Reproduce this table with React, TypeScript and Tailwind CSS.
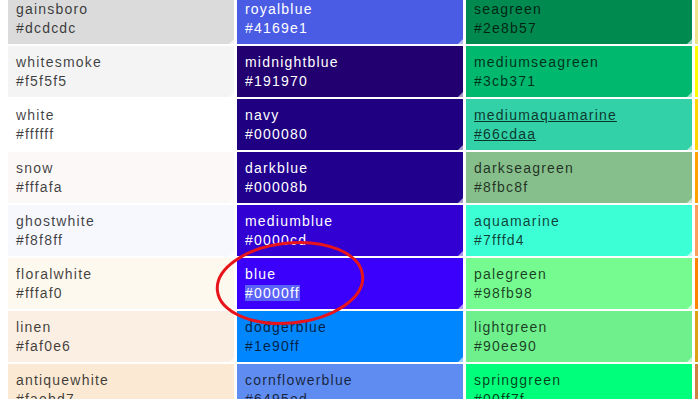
import React from "react";

type Swatch = {
  name: string;
  hex: string;
  bg: string;
  light?: boolean;
  hover?: boolean;
  selected?: boolean;
};

// one array per column, top to bottom
const columns: Swatch[][] = [
  [
    { name: "gainsboro", hex: "#dcdcdc", bg: "bg-[#dbdbdb]" },
    { name: "whitesmoke", hex: "#f5f5f5", bg: "bg-[#f4f4f4]" },
    { name: "white", hex: "#ffffff", bg: "bg-white" },
    { name: "snow", hex: "#fffafa", bg: "bg-[#fdf8f8]" },
    { name: "ghostwhite", hex: "#f8f8ff", bg: "bg-[#f7f7fe]" },
    { name: "floralwhite", hex: "#fffaf0", bg: "bg-[#fef9ee]" },
    { name: "linen", hex: "#faf0e6", bg: "bg-[#fbeee3]" },
    { name: "antiquewhite", hex: "#faebd7", bg: "bg-[#fbe9d4]" },
  ],
  [
    { name: "royalblue", hex: "#4169e1", bg: "bg-[#4a5ce4]", light: true },
    { name: "midnightblue", hex: "#191970", bg: "bg-[#22006f]", light: true },
    { name: "navy", hex: "#000080", bg: "bg-[#1e0080]", light: true },
    { name: "darkblue", hex: "#00008b", bg: "bg-[#21008e]", light: true },
    { name: "mediumblue", hex: "#0000cd", bg: "bg-[#3200d2]", light: true },
    { name: "blue", hex: "#0000ff", bg: "bg-[#3b00fb]", light: true, selected: true },
    { name: "dodgerblue", hex: "#1e90ff", bg: "bg-[#0086ff]" },
    { name: "cornflowerblue", hex: "#6495ed", bg: "bg-[#5f8cf0]" },
  ],
  [
    { name: "seagreen", hex: "#2e8b57", bg: "bg-[#008a4f]" },
    { name: "mediumseagreen", hex: "#3cb371", bg: "bg-[#00b86e]" },
    { name: "mediumaquamarine", hex: "#66cdaa", bg: "bg-[#33d1a8]", hover: true },
    { name: "darkseagreen", hex: "#8fbc8f", bg: "bg-[#86bf8b]" },
    { name: "aquamarine", hex: "#7fffd4", bg: "bg-[#3dffd6]" },
    { name: "palegreen", hex: "#98fb98", bg: "bg-[#75fb8f]" },
    { name: "lightgreen", hex: "#90ee90", bg: "bg-[#6ff08d]" },
    { name: "springgreen", hex: "#00ff7f", bg: "bg-[#00ff7a]" },
  ],
  [
    { name: "palegoldenrod", hex: "#eee8aa", bg: "bg-[#efe48c]" },
    { name: "yellow", hex: "#ffff00", bg: "bg-[#fffb00]" },
    { name: "gold", hex: "#ffd700", bg: "bg-[#ffd400]" },
    { name: "orange", hex: "#ffa500", bg: "bg-[#ffa100]" },
    { name: "sandybrown", hex: "#f4a460", bg: "bg-[#fa9f5c]" },
    { name: "darkorange", hex: "#ff8c00", bg: "bg-[#ff8500]" },
    { name: "goldenrod", hex: "#daa520", bg: "bg-[#dba215]" },
    { name: "peru", hex: "#cd853f", bg: "bg-[#cd8440]" },
  ],
];

function SwatchCell({ s }: { s: Swatch }) {
  const text = s.light ? "text-white" : "text-black/75";
  return (
    <a
      className={`relative block h-[51px] shrink-0 px-2 pt-[7px] text-[14px] leading-[19px] tracking-[1.2px] ${s.bg} ${text} ${
        s.hover ? "underline" : ""
      }`}
    >
      <span className="block whitespace-nowrap">{s.name}</span>
      <span className="block whitespace-nowrap">
        {s.selected ? (
          <span className="bg-[#5a62f7]">{s.hex}</span>
        ) : (
          s.hex
        )}
      </span>
      {/* little corner fold */}
      <span className="absolute bottom-0 right-0 h-[5px] w-[5px] bg-white/60 [clip-path:polygon(100%_0,100%_100%,0_100%)]" />
    </a>
  );
}

export default function App() {
  return (
    <div
      className="relative h-[399px] w-[698px] overflow-hidden bg-white"
      style={{ fontFamily: '"Liberation Sans", Arial, sans-serif' }}
    >
      <div className="-mt-[7px] flex gap-[3px] pl-2">
        {columns.map((col, i) => (
          <div key={i} className="flex w-[226px] shrink-0 flex-col gap-[2px]">
            {col.map((s) => (
              <SwatchCell key={s.name} s={s} />
            ))}
          </div>
        ))}
      </div>

      <svg
        className="pointer-events-none absolute left-0 top-0"
        width="698"
        height="399"
        viewBox="0 0 698 399"
      >
        <ellipse
          cx="290"
          cy="283"
          rx="73"
          ry="40"
          transform="rotate(-6 290 283)"
          fill="none"
          stroke="#e8141b"
          strokeWidth="3"
        />
      </svg>
    </div>
  );
}
